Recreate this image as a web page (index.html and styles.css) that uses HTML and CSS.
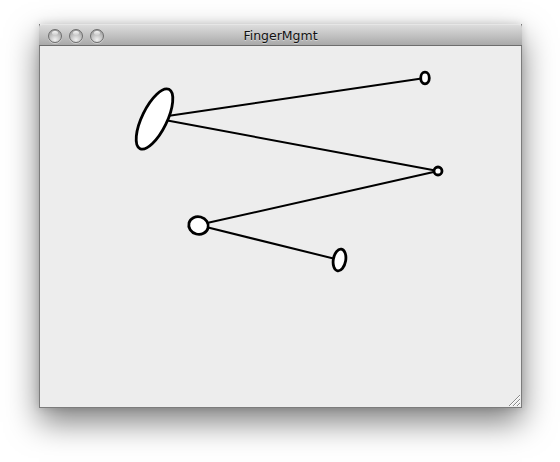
FILE: index.html
```html
<!DOCTYPE html>
<html>
<head>
<meta charset="utf-8">
<title>FingerMgmt</title>
<link rel="stylesheet" href="styles.css">
</head>
<body>
<div class="window">
  <div class="titlebar">
    <div class="lights">
      <span class="light"></span>
      <span class="light"></span>
      <span class="light"></span>
    </div>
    <div class="title">FingerMgmt</div>
  </div>
  <div class="content">
    <svg class="canvas" width="481" height="360" viewBox="40 46 481 360">
      <g stroke="#000" stroke-width="2" fill="none" stroke-linecap="round">
        <line x1="154" y1="118" x2="425" y2="78"/>
        <line x1="154" y1="118" x2="438" y2="171"/>
        <line x1="438" y1="171" x2="198" y2="225"/>
        <line x1="198" y1="225" x2="339.5" y2="260"/>
      </g>
      <g stroke="#000" stroke-width="2.8" fill="#fff">
        <ellipse cx="154.5" cy="119" rx="12.5" ry="33" transform="rotate(26 154.5 119)"/>
        <ellipse cx="425" cy="78" rx="4.3" ry="5.8"/>
        <ellipse cx="438" cy="171" rx="4" ry="4"/>
        <ellipse cx="198.5" cy="225.5" rx="9.8" ry="8.8" transform="rotate(15 198.5 225.5)"/>
        <ellipse cx="339.5" cy="260" rx="6.2" ry="11" transform="rotate(10 339.5 260)"/>
      </g>
    </svg>
    <svg class="grip" width="12" height="12" viewBox="0 0 12 12">
      <g stroke="#8a8a8a" stroke-width="1">
        <line x1="1" y1="12" x2="12" y2="1"/>
        <line x1="5" y1="12" x2="12" y2="5"/>
        <line x1="9" y1="12" x2="12" y2="9"/>
      </g>
      <g stroke="#fff" stroke-width="1">
        <line x1="2" y1="12" x2="12" y2="2"/>
        <line x1="6" y1="12" x2="12" y2="6"/>
        <line x1="10" y1="12" x2="12" y2="10"/>
      </g>
    </svg>
  </div>
</div>
</body>
</html>
```
FILE: styles.css
```css
html, body {
  margin: 0;
  padding: 0;
  background: #ffffff;
}
body {
  width: 560px;
  height: 462px;
  overflow: hidden;
  padding: 24px 0 0 39px;
  box-sizing: border-box;
}
.window {
  width: 483px;
  height: 384px;
  box-sizing: border-box;
  border: 1px solid #7c7c7c;
  border-top: none;
  display: flex;
  flex-direction: column;
  background: #ededed;
  box-shadow: 0 14px 30px rgba(0, 0, 0, 0.5), 0 0 8px rgba(0,0,0,0.15);
}
.titlebar {
  height: 22px;
  flex: none;
  box-sizing: border-box;
  margin: 0 -1px;
  border-bottom: 1px solid #6d6d6d;
  border-top: 1px solid #e6e6e6;
  background: linear-gradient(#dcdcdc, #c6c6c6 45%, #a9a9a9);
  border-radius: 4px 4px 0 0;
  position: relative;
  display: flex;
  align-items: center;
}
.lights {
  display: flex;
  gap: 7px;
  padding-left: 9px;
  padding-top: 1px;
}
.light {
  width: 14px;
  height: 14px;
  box-sizing: border-box;
  border-radius: 50%;
  border: 1px solid #6e6e6e;
  background: radial-gradient(circle at 50% 80%, #f0f0f0 0%, #c4c4c4 45%, #8e8e8e 100%);
  box-shadow: 0 1px 0 rgba(255,255,255,0.4);
  position: relative;
}
.light::after {
  content: "";
  position: absolute;
  left: 3px;
  top: 1px;
  width: 6px;
  height: 4px;
  border-radius: 50%;
  background: linear-gradient(rgba(255,255,255,0.95), rgba(255,255,255,0.2));
}
.title {
  position: absolute;
  left: 0;
  right: 0;
  top: 3px;
  text-align: center;
  font-family: "DejaVu Sans", sans-serif;
  font-size: 12.5px;
  color: #111;
  text-shadow: 0 1px 0 rgba(255,255,255,0.45);
}
.content {
  flex: 1;
  position: relative;
  overflow: hidden;
}
.canvas {
  display: block;
}
.grip {
  position: absolute;
  right: 1px;
  bottom: 1px;
}
```
